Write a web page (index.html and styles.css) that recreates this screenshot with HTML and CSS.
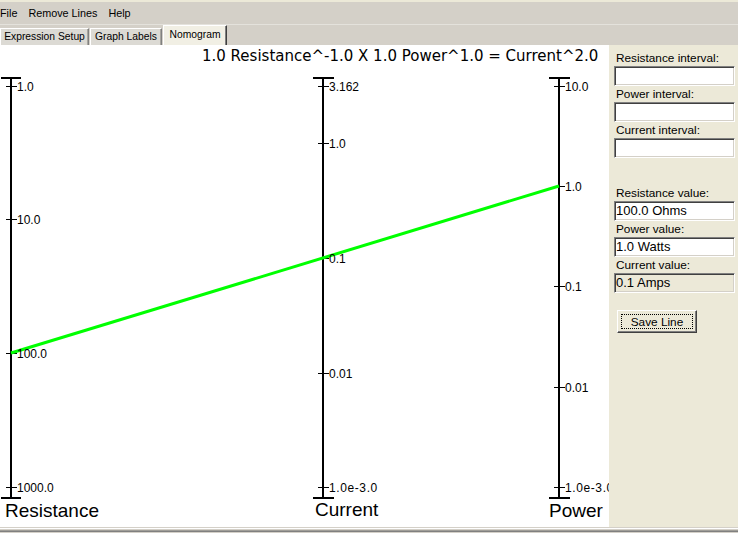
FILE: index.html
```html
<!DOCTYPE html>
<html>
<head>
<meta charset="utf-8">
<title>Nomogram</title>
<link rel="stylesheet" href="styles.css">
</head>
<body>
<div class="app">
  <div class="menubar">
    <span class="menu">File</span>
    <span class="menu">Remove Lines</span>
    <span class="menu">Help</span>
  </div>
  <div class="tabstrip">
    <div class="tab tab-expr">Expression Setup</div>
    <div class="tab tab-labels">Graph Labels</div>
    <div class="tab tab-nomo active">Nomogram</div>
  </div>
  <div class="main">
    <div class="canvas">
      <svg class="nomo" width="609" height="482" viewBox="0 45 609 482" xmlns="http://www.w3.org/2000/svg">
        <text class="title" x="202" y="61">1.0 Resistance^-1.0 X 1.0 Power^1.0 = Current^2.0</text>

        <g class="axis">
          <line x1="11" y1="77" x2="11" y2="499"/>
          <line x1="323" y1="77" x2="323" y2="499"/>
          <line x1="559" y1="77" x2="559" y2="499"/>
        </g>
        <g class="cap">
          <line x1="1" y1="78" x2="21" y2="78"/>
          <line x1="1" y1="498" x2="21" y2="498"/>
          <line x1="313" y1="78" x2="334" y2="78"/>
          <line x1="313" y1="498" x2="334" y2="498"/>
          <line x1="549" y1="78" x2="570" y2="78"/>
          <line x1="549" y1="498" x2="570" y2="498"/>
        </g>
        <g class="tick">
          <line x1="6" y1="86.5" x2="17" y2="86.5"/>
          <line x1="6" y1="219.5" x2="17" y2="219.5"/>
          <line x1="6" y1="353.5" x2="17" y2="353.5"/>
          <line x1="6" y1="487.5" x2="17" y2="487.5"/>

          <line x1="318" y1="86.5" x2="329" y2="86.5"/>
          <line x1="318" y1="143.5" x2="329" y2="143.5"/>
          <line x1="318" y1="258.5" x2="329" y2="258.5"/>
          <line x1="318" y1="373.5" x2="329" y2="373.5"/>
          <line x1="318" y1="487.5" x2="329" y2="487.5"/>

          <line x1="554" y1="86.5" x2="565" y2="86.5"/>
          <line x1="554" y1="186.5" x2="565" y2="186.5"/>
          <line x1="554" y1="286.5" x2="565" y2="286.5"/>
          <line x1="554" y1="387.5" x2="565" y2="387.5"/>
          <line x1="554" y1="487.5" x2="565" y2="487.5"/>
        </g>

        <line class="solution" x1="11" y1="353" x2="559" y2="186"/>

        <g class="ticklabel">
          <text x="17" y="91">1.0</text>
          <text x="17" y="224">10.0</text>
          <text x="17" y="358">100.0</text>
          <text x="17" y="492">1000.0</text>

          <text x="329" y="91">3.162</text>
          <text x="329" y="148">1.0</text>
          <text x="329" y="263">0.1</text>
          <text x="329" y="378">0.01</text>
          <text class="sci" x="329" y="492">1.0e-3.0</text>

          <text x="565" y="91">10.0</text>
          <text x="565" y="191">1.0</text>
          <text x="565" y="291">0.1</text>
          <text x="565" y="392">0.01</text>
          <text class="sci" x="565" y="492">1.0e-3.0</text>
        </g>

        <g class="axislabel">
          <text x="5" y="517">Resistance</text>
          <text x="315" y="516">Current</text>
          <text x="549" y="517">Power</text>
        </g>
      </svg>
    </div>
    <div class="panel">
      <div class="lbl">Resistance interval:</div>
      <div class="field"></div>
      <div class="lbl">Power interval:</div>
      <div class="field"></div>
      <div class="lbl">Current interval:</div>
      <div class="field"></div>

      <div class="lbl lbl-gap">Resistance value:</div>
      <div class="field">100.0 Ohms</div>
      <div class="lbl">Power value:</div>
      <div class="field">1.0 Watts</div>
      <div class="lbl">Current value:</div>
      <div class="field field-disabled">0.1 Amps</div>

      <button class="btn" type="button"><span class="btn-focus">Save Line</span></button>
    </div>
  </div>
  <div class="bottom"></div>
</div>
</body>
</html>
```

FILE: styles.css
```css
* { box-sizing: border-box; }

html, body {
  margin: 0;
  padding: 0;
}

body {
  width: 738px;
  height: 533px;
  overflow: hidden;
  background: #d4d0c8;
  font-family: "Liberation Sans", Arial, sans-serif;
  color: #000;
}

.app {
  display: flex;
  flex-direction: column;
  height: 533px;
}

/* menu bar */
.menubar {
  height: 24px;
  display: flex;
  align-items: center;
  gap: 11px;
  background: #d4d0c8;
  border-top: 2px solid #ece9d8;
  font-size: 10.8px;
  padding-bottom: 1px;
}

/* tabs */
.tabstrip {
  height: 21px;
  display: flex;
  align-items: flex-end;
  background: #d4d0c8;
  border-top: 1px solid #e4e2dc;
}

.tab {
  height: 17px;
  font-size: 10.3px;
  line-height: 15px;
  text-align: center;
  white-space: nowrap;
  background: #dcdad4;
  border-top: 1px solid #ffffff;
  border-left: 1px solid #ffffff;
  border-right: 1px solid #808080;
  box-shadow: inset -1px 0 0 #a8a69f;
}

.tab-expr { width: 89px; margin-right: 1px; }
.tab-labels { width: 72px; margin-right: 1px; }
.tab-nomo { width: 64px; }

.tab.active {
  height: 20px;
  line-height: 17px;
  background: #f1efe4;
  border-right: 1px solid #404040;
  box-shadow: inset -1px 0 0 #808080;
}

/* main area */
.main {
  display: flex;
  height: 482px;
}

.canvas {
  width: 609px;
  height: 482px;
  background: #ffffff;
  overflow: hidden;
}

.nomo {
  display: block;
}

.title {
  font-family: "DejaVu Sans", Verdana, sans-serif;
  font-size: 15px;
  fill: #000;
}

.axis line {
  stroke: #000;
  stroke-width: 2;
  shape-rendering: crispEdges;
}

.cap line {
  stroke: #000;
  stroke-width: 2;
  shape-rendering: crispEdges;
}

.tick line {
  stroke: #000;
  stroke-width: 1;
  shape-rendering: crispEdges;
}

.solution {
  stroke: #00ff00;
  stroke-width: 3;
}

.ticklabel text {
  font-family: "Liberation Sans", Arial, sans-serif;
  font-size: 12px;
  fill: #000;
}

.ticklabel .sci {
  letter-spacing: 0.6px;
}

.axislabel text {
  font-family: "Liberation Sans", Arial, sans-serif;
  font-size: 19px;
  fill: #000;
}

/* side panel */
.panel {
  flex: 1;
  background: #ece9d8;
  padding: 5px 3px 0 5px;
  display: flex;
  flex-direction: column;
}

.lbl {
  height: 16px;
  line-height: 16px;
  font-size: 11.8px;
  padding-left: 2px;
  white-space: nowrap;
  color: #000;
}

.lbl-gap {
  margin-top: 27px;
}

.field {
  height: 20px;
  background: #ffffff;
  border-top: 1px solid #808080;
  border-left: 1px solid #808080;
  border-bottom: 1px solid #ffffff;
  border-right: 1px solid #ffffff;
  box-shadow: inset 1px 1px 0 #404040, inset -1px -1px 0 #d4d0c8;
  font-size: 13px;
  line-height: 18px;
  padding-left: 1px;
  white-space: nowrap;
  overflow: hidden;
}

.field-disabled {
  background: #ece9d8;
}

.btn {
  margin-top: 17px;
  margin-left: 3px;
  width: 80px;
  height: 23px;
  padding: 3px;
  background: #ece9d8;
  border-top: 1px solid #ffffff;
  border-left: 1px solid #ffffff;
  border-right: 1px solid #404040;
  border-bottom: 1px solid #404040;
  box-shadow: inset -1px -1px 0 #808080;
  font-family: "Liberation Sans", Arial, sans-serif;
  font-size: 11.8px;
  color: #000;
  display: flex;
  align-items: stretch;
}

.btn-focus {
  flex: 1;
  border: 1px dotted #000;
  display: flex;
  align-items: center;
  justify-content: center;
}

/* bottom frame edge */
.bottom {
  height: 6px;
  background: linear-gradient(#d4d0c8 0, #d4d0c8 1px, #ffffff 1px, #ffffff 2px, #d4d0c8 2px, #d4d0c8 3px, #a09e98 3px, #a09e98 4px, #808080 4px, #808080 5px, #d4d0c8 5px);
}
```
